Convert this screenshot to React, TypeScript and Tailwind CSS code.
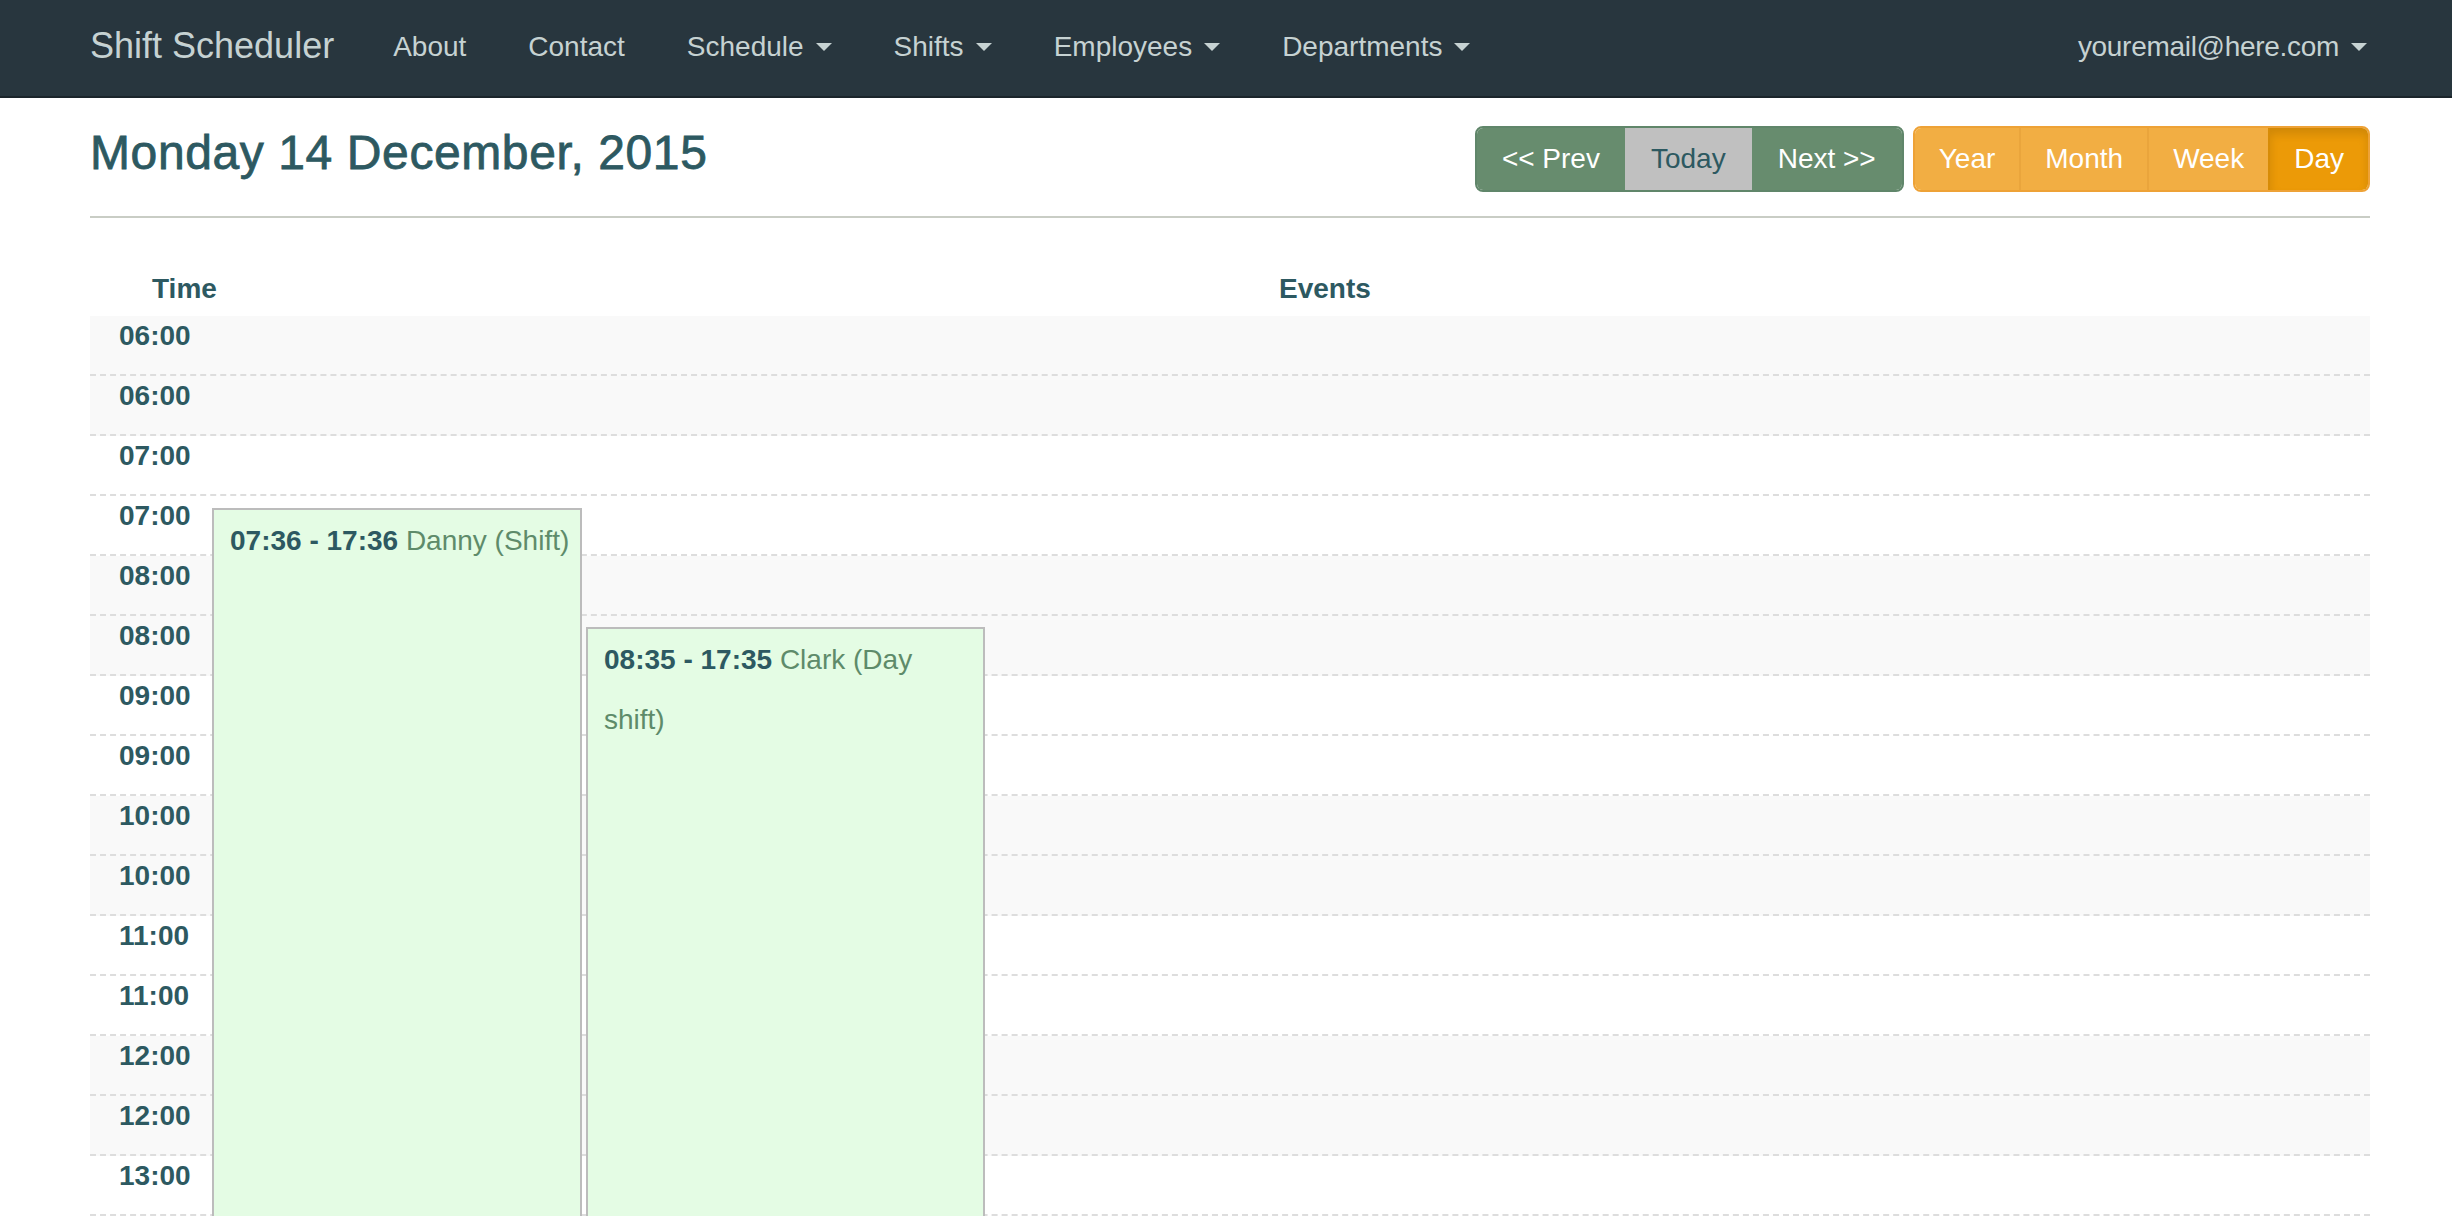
import React from 'react'

const navItems = [
  { label: 'About', caret: false },
  { label: 'Contact', caret: false },
  { label: 'Schedule', caret: true },
  { label: 'Shifts', caret: true },
  { label: 'Employees', caret: true },
  { label: 'Departments', caret: true },
]

// two half-hour rows per hour, label repeats like the original
const hours = [6, 7, 8, 9, 10, 11, 12, 13]
const rows = hours
  .flatMap((h) => {
    const label = `${String(h).padStart(2, '0')}:00`
    return [
      { label, shaded: h % 2 === 0 },
      { label, shaded: h % 2 === 0 },
    ]
  })
  .slice(0, 15)

const events = [
  { time: '07:36 - 17:36', name: 'Danny (Shift)', top: 'top-[192px]', left: 'left-[122px]', width: 'w-[370px]', nowrap: true },
  { time: '08:35 - 17:35', name: 'Clark (Day shift)', top: 'top-[311px]', left: 'left-[496px]', width: 'w-[399px]', nowrap: false },
]

function Caret() {
  return (
    <span className="inline-block w-0 h-0 ml-[12px] align-middle border-x-[8px] border-x-transparent border-t-[8px] border-t-[#c6d2d2]" />
  )
}

function NavBar() {
  return (
    <div className="bg-[#28363e] border-b-2 border-[#1b252b]">
      <div className="ml-[90px] w-[2280px] h-[96px] flex items-center text-[#c6d2d2]">
        <span className="text-[36px] leading-[40px] -mt-[4px]">Shift Scheduler</span>
        <div className="flex items-center gap-[62px] ml-[59px] text-[28px] leading-[40px] -mt-[2px]">
          {navItems.map((item) => (
            <span key={item.label} className="flex items-center">
              {item.label}
              {item.caret && <Caret />}
            </span>
          ))}
        </div>
        <span className="ml-auto flex items-center text-[28px] leading-[40px] mr-[3px] -mt-[2px] tracking-[-0.3px]">
          youremail@here.com
          <Caret />
        </span>
      </div>
    </div>
  )
}

function Toolbar() {
  return (
    <div className="h-[120px] border-b-2 border-[#c9cdc5] flex justify-between items-start pt-[28px]">
      <h3 className="text-[48px] leading-[53px] text-[#2d5961] tracking-[0.6px] [-webkit-text-stroke:0.8px_#2d5961]">
        Monday 14 December, 2015
      </h3>
      <div className="flex gap-[9px] text-[28px]">
        <div className="flex h-[66px] rounded-[8px] overflow-hidden border-2 border-[#60866a]">
          <span className="flex items-center px-[25px] bg-[#678c6e] text-white">&lt;&lt; Prev</span>
          <span className="flex items-center px-[26px] bg-[#c0c0c0] text-[#2d5961]">Today</span>
          <span className="flex items-center px-[26px] bg-[#678c6e] text-white">Next &gt;&gt;</span>
        </div>
        <div className="flex h-[66px] rounded-[8px] overflow-hidden border-2 border-[#eea236] text-white">
          <span className="flex items-center px-[24px] bg-[#f2ae43]">Year</span>
          <span className="flex items-center px-[24px] bg-[#f2ae43] border-l-2 border-[#eaa53c]">Month</span>
          <span className="flex items-center px-[24px] bg-[#f2ae43] border-l-2 border-[#eaa53c]">Week</span>
          <span className="flex items-center px-[24px] bg-[#ec9a07] border-l-2 border-[#d88c06] shadow-[inset_0_6px_10px_rgba(0,0,0,0.12)]">Day</span>
        </div>
      </div>
    </div>
  )
}

function DayTable() {
  return (
    <div className="text-[#2d5961]">
      <div className="h-[98px] pt-[51px] flex text-[28px] leading-[40px] font-bold">
        <div className="w-[122px] pl-[62px]">Time</div>
        <div className="pl-[1067px]">Events</div>
      </div>
      <div className="relative">
        {rows.map((row, i) => (
          <div
            key={i}
            className={`h-[60px] border-b-2 border-dashed border-[#dddddd] ${row.shaded ? 'bg-[#f9f9f9]' : 'bg-white'}`}
          >
            <div className="pl-[29px] text-[28px] leading-[40px] font-bold">{row.label}</div>
          </div>
        ))}

        {events.map((ev) => (
          <div
            key={ev.time}
            className={`absolute ${ev.top} ${ev.left} ${ev.width} h-[1200px] bg-[#e4fce4] border-2 border-[#bcbcbc] pt-[1px] pl-[16px] pr-[16px] text-[28px] leading-[60px] ${ev.nowrap ? 'whitespace-nowrap' : ''}`}
          >
            <span className="font-bold text-[#2d5961]">{ev.time}</span>{' '}
            <span className="text-[#5e8b6a]">{ev.name}</span>
          </div>
        ))}
      </div>
    </div>
  )
}

export default function App() {
  return (
    <div className="h-screen overflow-hidden bg-white font-['Liberation_Sans',Arial,sans-serif]">
      <NavBar />
      <div className="ml-[90px] w-[2280px]">
        <Toolbar />
        <DayTable />
      </div>
    </div>
  )
}
